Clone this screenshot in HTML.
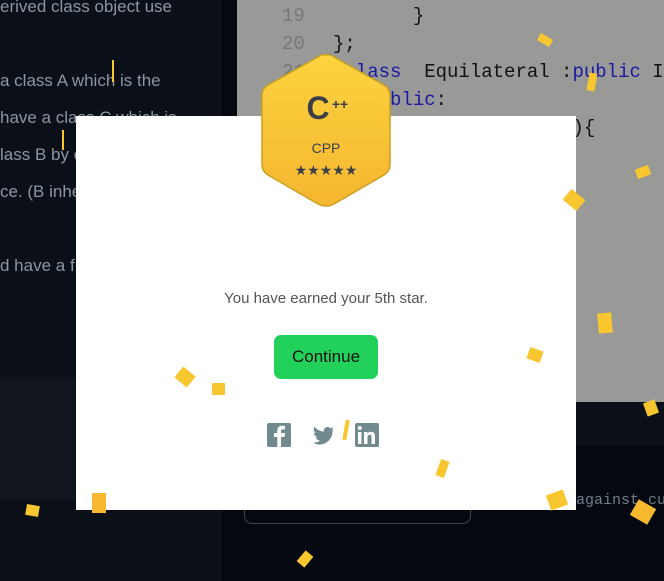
<!DOCTYPE html>
<html><head><style>
body{margin:0;width:664px;height:581px;overflow:hidden;background:#05080f;font-family:"Liberation Sans",sans-serif;position:relative}
.a{position:absolute}
.code{font-family:"Liberation Mono",monospace;font-size:19px;white-space:pre;color:#111}
.c{position:absolute;background:#f8c62f}
</style></head><body>
<div class="a" style="left:0;top:0;width:222px;height:581px;background:#0b0f17"></div>
<div class="a" style="left:0;top:377px;width:222px;height:123px;background:#11151d"></div>
<div class="a" style="left:237px;top:0;width:427px;height:402px;background:#999998"></div>
<div class="a" style="left:237px;top:402px;width:427px;height:44px;background:#0b0f17"></div>
<div class="a" style="color:#8d96a3;font-size:17px;left:0;top:-12px;line-height:37px">erived class object use<br><br>a class A which is the<br>have a class C which is<br>lass B by c<br>ce. (B inhe<br><br>d have a f</div>
<div class="a code" style="left:282px;top:2px;line-height:28px;color:#777">19
20
21</div>
<div class="a code" style="left:333px;top:2px;line-height:28px">       }
};
 <span style="color:#1a1aa6">class</span>  Equilateral :<span style="color:#1a1aa6">public</span> Iso
   <span style="color:#1a1aa6">public</span>:
    <span style="color:#1a1aa6">void</span> equilateral(){
         <span style="color:#8b1010">n equilat</span></div>
<div class="a" style="left:244px;top:470px;width:225px;height:52px;border:1px solid #444;border-radius:8px"></div>
<div class="a code" style="left:576px;top:492px;font-size:15px;color:#6f7f8a">against cu</div>
<div class="a" style="left:76px;top:116px;width:500px;height:394px;background:#fff"></div>
<svg class="a" style="left:256px;top:53px" width="140" height="155" viewBox="0 0 140 155">
<defs><linearGradient id="g" x1="0" y1="0" x2="0" y2="1"><stop offset="0" stop-color="#fcd33f"/><stop offset="1" stop-color="#f5b630"/></linearGradient></defs>
<path d="M70 2 Q74 1 78 4 L128 32 Q134 36 134 42 L134 112 Q134 118 128 122 L78 151 Q70 155 62 151 L12 122 Q6 118 6 112 L6 42 Q6 36 12 32 L62 4 Q66 1 70 2Z" fill="url(#g)" stroke="#c9a020" stroke-width="1.5"/>
<text x="62" y="66" text-anchor="middle" font-family="Liberation Sans" font-weight="bold" font-size="32" fill="#3a3f4a">C</text>
<text x="84" y="56" text-anchor="middle" font-family="Liberation Sans" font-weight="bold" font-size="14" fill="#3a3f4a">++</text>
<text x="70" y="100" text-anchor="middle" font-family="Liberation Sans" font-size="14" fill="#3a3f4a">CPP</text>
<text x="70" y="122" text-anchor="middle" font-size="14" fill="#3a3f4a" letter-spacing="0">★★★★★</text>
</svg>
<div class="a" style="left:76px;width:500px;top:290px;text-align:center;color:#555;font-size:15px">You have earned your 5th star.</div>
<div class="a" style="left:274px;top:335px;width:104px;height:44px;background:#21d15a;border-radius:7px;color:#111;font-size:17px;text-align:center;line-height:44px">Continue</div>
<svg class="a" style="left:266px;top:422px" width="115" height="26" viewBox="0 0 115 26">
<rect x="1" y="1" width="24" height="24" rx="2" fill="#708a8e"/><path d="M15 25V15h3.5l.5-4h-4V9c0-1 .4-1.6 1.8-1.6H19V4c-.6-.1-1.7-.2-3-.2-3 0-4.7 1.8-4.7 5V11H8v4h3.3v10z" fill="#fff"/>
<g transform="translate(22,0)"><path d="M46 7c-.9.4-1.8.6-2.7.7 1-.6 1.7-1.5 2-2.6-.9.5-1.9.9-3 1.1-1.8-1.9-4.9-1.6-6.1.8-.4.8-.5 1.8-.3 2.6-3.8-.2-7.1-2-9.4-4.8-1.3 2.2-.6 4.9 1.5 6.3-.8 0-1.5-.2-2.1-.6 0 2.3 1.6 4.2 3.8 4.7-.7.2-1.4.2-2.1.1.6 1.9 2.4 3.2 4.4 3.3-2 1.6-4.5 2.3-7 2 8.6 5.4 19.5-.8 19.5-11.7V8.6C44.5 8.2 45.4 7.6 46 7z" fill="#708a8e"/></g>
<rect x="89" y="1" width="24" height="24" rx="2" fill="#708a8e"/><rect x="92" y="10" width="3.5" height="12" fill="#fff"/><circle cx="93.7" cy="6" r="2" fill="#fff"/><path d="M98 10h3.3v1.7c.7-1.2 2-2 3.7-2 3 0 4 1.8 4 4.6V22h-3.5v-7c0-1.5-.5-2.3-1.8-2.3s-2.2.9-2.2 2.3v7H98z" fill="#fff"/>
</svg>
<div class="c" style="left:177px;top:370px;width:16px;height:14px;transform:rotate(40deg)"></div>
<div class="c" style="left:212px;top:383px;width:13px;height:12px"></div>
<div class="c" style="left:92px;top:493px;width:14px;height:20px;background:#f7b72e"></div>
<div class="c" style="left:26px;top:505px;width:13px;height:11px;transform:rotate(10deg)"></div>
<div class="c" style="left:344px;top:420px;width:4px;height:20px;transform:rotate(10deg)"></div>
<div class="c" style="left:438px;top:460px;width:9px;height:17px;transform:rotate(20deg)"></div>
<div class="c" style="left:548px;top:492px;width:18px;height:16px;transform:rotate(-20deg)"></div>
<div class="c" style="left:633px;top:503px;width:20px;height:18px;transform:rotate(30deg);background:#f7b72e"></div>
<div class="c" style="left:598px;top:313px;width:14px;height:20px;transform:rotate(-5deg)"></div>
<div class="c" style="left:528px;top:349px;width:14px;height:12px;transform:rotate(20deg)"></div>
<div class="c" style="left:565px;top:193px;width:18px;height:14px;transform:rotate(40deg)"></div>
<div class="c" style="left:588px;top:73px;width:8px;height:18px;transform:rotate(10deg)"></div>
<div class="c" style="left:636px;top:167px;width:14px;height:10px;transform:rotate(-20deg)"></div>
<div class="c" style="left:645px;top:401px;width:12px;height:14px;transform:rotate(-20deg)"></div>
<div class="c" style="left:538px;top:36px;width:14px;height:8px;transform:rotate(30deg)"></div>
<div class="c" style="left:300px;top:552px;width:10px;height:14px;transform:rotate(40deg)"></div>
<div class="c" style="left:112px;top:60px;width:2px;height:22px"></div>
<div class="c" style="left:62px;top:130px;width:2px;height:20px"></div>
</body></html>
